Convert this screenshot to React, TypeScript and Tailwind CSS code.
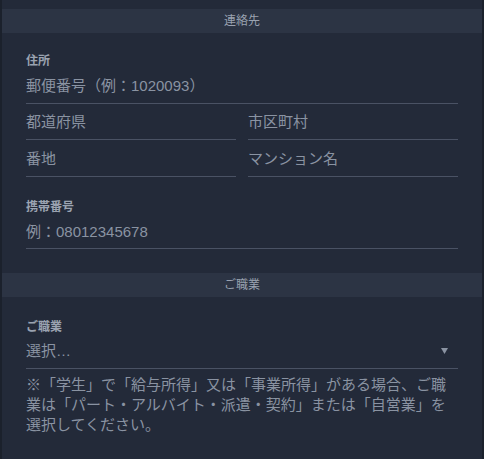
import React from 'react';

const FONT = { fontFamily: '"Liberation Sans", "Noto Sans CJK JP", sans-serif' };

function SectionHeader({ title }: { title: string }) {
  return (
    <div className="h-6 bg-[#2c3444] flex items-center justify-center text-[12px] leading-none text-[#9aa2b0]">
      {title}
    </div>
  );
}

function Label({ text }: { text: string }) {
  return <div className="h-[14px] leading-[14px] text-[12px] font-bold text-[#9ba3b1]">{text}</div>;
}

function Field({ placeholder, className = '' }: { placeholder: string; className?: string }) {
  return (
    <input
      placeholder={placeholder}
      className={`w-full h-9 bg-transparent border-b border-[#4a5264] text-[15px] text-[#c7ccd4] placeholder:text-[#8a93a2] outline-none ${className}`}
      style={FONT}
    />
  );
}

export default function App() {
  return (
    <div className="min-h-screen bg-[#232a39] border-x-2 border-[#1b212c] pt-[9px]" style={FONT}>
      <SectionHeader title="連絡先" />
      <div className="px-6 pt-[21px] pb-6">
        <Label text="住所" />
        <Field placeholder="郵便番号（例：1020093）" />
        <div className="grid grid-cols-2 gap-x-3">
          <Field placeholder="都道府県" />
          <Field placeholder="市区町村" />
          <Field placeholder="番地" className="h-[37px]" />
          <Field placeholder="マンション名" className="h-[37px]" />
        </div>
        <div className="mt-[23px]">
          <Label text="携帯番号" />
          <Field placeholder="例：08012345678" className="h-[35px]" />
        </div>
      </div>

      <SectionHeader title="ご職業" />
      <div className="px-6 pt-[23px] pb-8">
        <Label text="ご職業" />
        <div className="h-[35px] border-b border-[#4a5264] flex items-center justify-between pr-2.5">
          <span className="text-[15px] text-[#8a93a2]">選択…</span>
          <svg width="7" height="6" viewBox="0 0 7 6" className="fill-[#8a93a2]">
            <path d="M0 0 H7 L3.5 6 Z" />
          </svg>
        </div>
        <p className="mt-[6px] text-[15px] leading-5 text-[#8a93a2]">
          ※「学生」で「給与所得」又は「事業所得」がある場合、ご職業は「パート・アルバイト・派遣・契約」または「自営業」を選択してください。
        </p>
      </div>
    </div>
  );
}
